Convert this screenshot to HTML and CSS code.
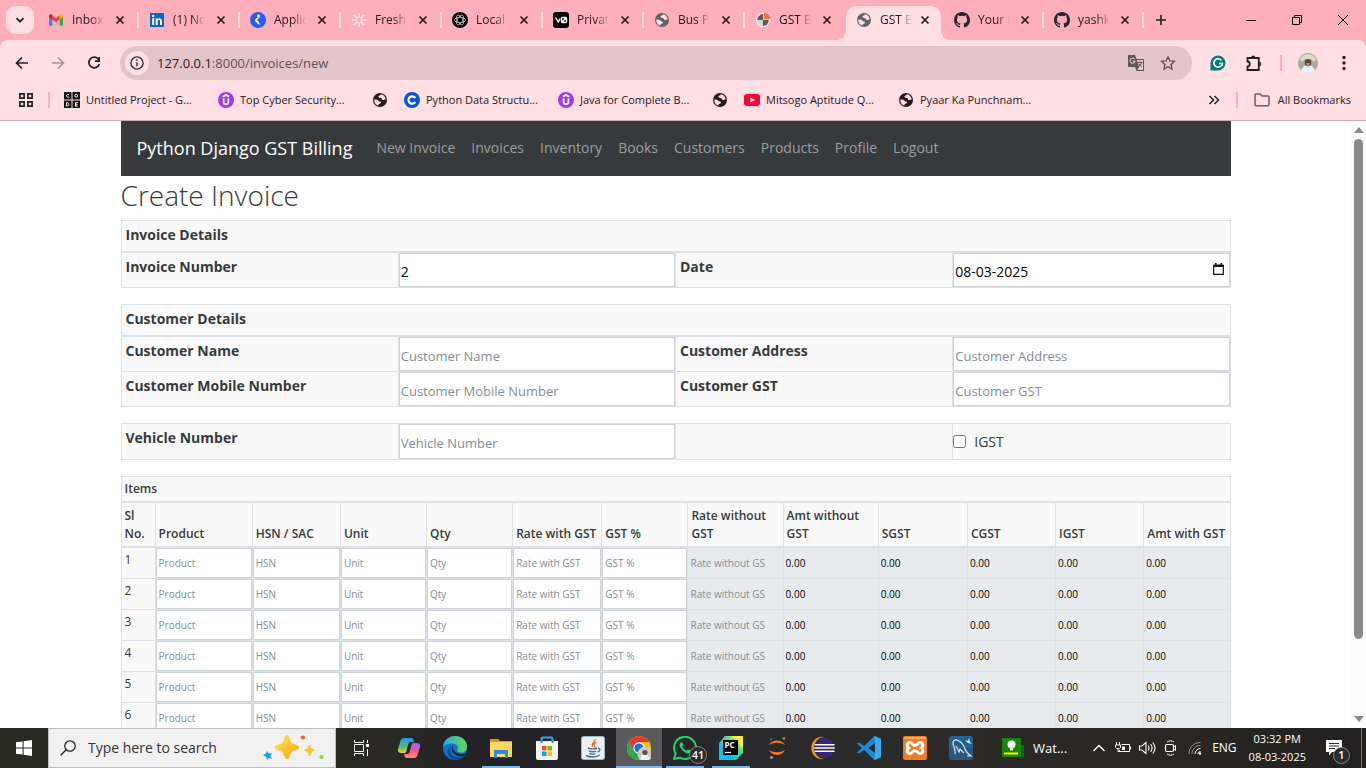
FILE: index.html
```html
<!DOCTYPE html>
<html lang="en">
<head>
<meta charset="utf-8">
<title>GST Billing</title>
<link rel="stylesheet" href="styles.css">
</head>
<body>
<svg class="defs" aria-hidden="true">
  <symbol id="close" viewBox="0 0 10 10"><path d="M1.500 1.500l7 7M8.500 1.500l-7 7" stroke="#27191c" stroke-width="1.700" fill="none"/></symbol>
  <symbol id="globe" viewBox="0 0 16 16"><circle cx="8" cy="8" r="7" fill="currentColor"/><path d="M2.300 7.500c2.500 0 3.500.2 4.200 1.200s2 .3 2.400 1.300-.8 1.600-1.600 2.100-.9.900-.9 1.500c-2.600-.6-4.400-3.200-4.100-6.100zM9 2.300c-.2 1-1.900 1.300-2.400 2s.2 1.800 1.800 1.700 1.300 1.900 2.500 2.100 1.600-1 2.800-.6C13.400 4.700 11.500 2.600 9 2.300z" fill="#ffdfe4"/></symbol>
  <symbol id="udemy" viewBox="0 0 16 16"><circle cx="8" cy="8" r="8" fill="#a435f0"/><path d="M4.800 4.800L8 2.900l3.200 1.900M5.600 6.200v3.900c0 3.100 4.800 3.100 4.800 0V6.200" fill="none" stroke="#fff" stroke-width="1.800"/></symbol>
  <symbol id="github" viewBox="0 0 16 16"><path fill="#24292f" d="M8 0C3.580 0 0 3.580 0 8c0 3.540 2.290 6.530 5.470 7.590.4.070.55-.17.55-.38v-1.490c-2.010.37-2.530-.49-2.690-.94-.09-.23-.48-.94-.82-1.130-.28-.15-.68-.52-.01-.53.63-.01 1.080.58 1.230.82.72 1.210 1.870.87 2.330.66.070-.52.280-.87.510-1.070-1.780-.2-3.640-.89-3.640-3.950 0-.87.310-1.590.82-2.150-.08-.2-.36-1.020.08-2.120 0 0 .67-.21 2.200.82a7.600 7.600 0 0 1 4 0c1.530-1.040 2.200-.82 2.200-.82.44 1.100.16 1.920.08 2.120.51.560.82 1.270.82 2.150 0 3.070-1.870 3.750-3.650 3.950.29.25.54.73.54 1.480v2.190c0 .21.15.46.55.38A8 8 0 0 0 16 8c0-4.420-3.580-8-8-8z"/></symbol>
</svg>

<header class="browser">
  <div class="tabstrip">
    <button class="tab-search" aria-label="Search tabs"><svg width="10" height="10" viewBox="0 0 10 10"><path d="M1.500 3.200L5 6.700l3.500-3.500" fill="none" stroke="#222" stroke-width="1.800"/></svg></button>
    <div class="tabs">
      <div class="tab"><svg class="fav" viewBox="0 0 16 16"><path fill="#4285f4" d="M1 3.500v9.200c0 .6.400 1 1 1h2.400V6z"/><path fill="#34a853" d="M15 3.500v9.200c0 .6-.4 1-1 1h-2.400V6z"/><path fill="#ea4335" d="M4.400 3.600L8 6.300l3.600-2.700v3.900L8 10.200 4.400 7.500z"/><path fill="#c5221f" d="M1 4c0-1.700 2-2.400 3.400-1.300v4.800L1 5z"/><path fill="#fbbc04" d="M15 4c0-1.700-2-2.400-3.400-1.300v4.800L15 5z"/></svg><span>Inbox</span><button aria-label="Close tab"><svg><use href="#close"/></svg></button></div>
      <div class="tab"><svg class="fav" viewBox="0 0 16 16"><rect x="1" y="1" width="14" height="14" rx="1" fill="#0a66c2"/><path d="M3.200 6.300h2V13h-2zM6.700 6.300h1.900v1c.9-1.600 4.400-1.700 4.400 1.600V13h-2V9.500c0-2.200-2.300-1.900-2.300 0V13h-2z" fill="#fff"/><circle cx="4.200" cy="4" r="1.200" fill="#fff"/></svg><span>(1) No</span><button aria-label="Close tab"><svg><use href="#close"/></svg></button></div>
      <div class="tab"><svg class="fav" viewBox="0 0 16 16"><circle cx="8" cy="8" r="8" fill="#275df5"/><circle cx="8.500" cy="3.800" r="1.500" fill="#fff"/><path d="M10.500 5.500C9 5.600 8.300 6.500 7 8c1.200 1.300 2.500 3 3 5-1.900-.7-3.300-2-4.500-3.500C4.800 8.600 5 7.500 5.800 6.800 6.500 6 8.500 4.900 10.500 5.500z" fill="#fff"/></svg><span>Applic</span><button aria-label="Close tab"><svg><use href="#close"/></svg></button></div>
      <div class="tab"><svg class="fav" viewBox="0 0 16 16"><path d="M8 1v5M8 10v5M1 8h5M10 8h5M3 3l3.500 3.500M9.500 9.500L13 13M13 3L9.500 6.500M6.500 9.500L3 13" stroke="#ffe7ed" stroke-width="1.400"/></svg><span>Freshe</span><button aria-label="Close tab"><svg><use href="#close"/></svg></button></div>
      <div class="tab"><svg class="fav" viewBox="0 0 16 16"><circle cx="8" cy="8" r="8" fill="#000"/><g fill="none" stroke="#ccc" stroke-width=".8"><ellipse cx="8" cy="8" rx="5.400" ry="2.700"/><ellipse cx="8" cy="8" rx="5.400" ry="2.700" transform="rotate(60 8 8)"/><ellipse cx="8" cy="8" rx="5.400" ry="2.700" transform="rotate(120 8 8)"/></g></svg><span>Local</span><button aria-label="Close tab"><svg><use href="#close"/></svg></button></div>
      <div class="tab"><svg class="fav" viewBox="0 0 16 16"><rect width="16" height="16" rx="3" fill="#000"/><path d="M2.500 5.500l2.800 4.600 1.800-3.600M8.500 10.500l5-5M9.500 5.500h3c1 0 1 0 1 1v3c0 1 0 1-1 1h-3c-1 0-1 0-1-1v-3c0-1 0-1 1-1z" stroke="#fff" stroke-width="1.400" fill="none"/></svg><span>Privat</span><button aria-label="Close tab"><svg><use href="#close"/></svg></button></div>
      <div class="tab"><svg class="fav grey"><use href="#globe"/></svg><span>Bus P</span><button aria-label="Close tab"><svg><use href="#close"/></svg></button></div>
      <div class="tab"><svg class="fav" viewBox="0 0 16 16"><circle cx="8" cy="8" r="6.700" fill="#d8d2d4" stroke="#eee"/><path d="M8 8V2a6 6 0 0 0-5.600 6z" fill="#555b60"/><path d="M8 8h5.500A5.500 5.500 0 0 1 8 14z" fill="#555b60"/><path d="M9 7V1c3.500 0 6 2.500 6 6z" fill="#ff6c37"/></svg><span>GST B</span><button aria-label="Close tab"><svg><use href="#close"/></svg></button></div>
      <div class="tab tab-active"><svg class="fav grey"><use href="#globe"/></svg><span>GST B</span><button aria-label="Close tab"><svg><use href="#close"/></svg></button></div>
      <div class="tab"><svg class="fav"><use href="#github"/></svg><span>Your R</span><button aria-label="Close tab"><svg><use href="#close"/></svg></button></div>
      <div class="tab"><svg class="fav"><use href="#github"/></svg><span>yashk</span><button aria-label="Close tab"><svg><use href="#close"/></svg></button></div>
    </div>
    <button class="new-tab" aria-label="New tab"><svg width="12" height="12" viewBox="0 0 12 12"><path d="M6 1v10M1 6h10" stroke="#222" stroke-width="1.600"/></svg></button>
    <div class="window-controls">
      <button aria-label="Minimize"><svg width="10" height="10"><path d="M0 5.500h10" stroke="#000"/></svg></button>
      <button aria-label="Restore"><svg width="10" height="10" fill="none" stroke="#000"><path d="M.5 2.500h7v7h-7zM2.500 2.500v-2h7v7h-2"/></svg></button>
      <button aria-label="Close"><svg width="10" height="10"><path d="M0 0l10 10M10 0L0 10" stroke="#000"/></svg></button>
    </div>
  </div>

  <div class="toolbar">
    <button aria-label="Back"><svg viewBox="0 0 16 16"><path d="M14 8H3M8 2.500L2.500 8 8 13.500" fill="none" stroke="#222" stroke-width="1.700"/></svg></button>
    <button aria-label="Forward"><svg viewBox="0 0 16 16"><path d="M2 8h11M8 2.500L13.500 8 8 13.500" fill="none" stroke="#a9979b" stroke-width="1.700"/></svg></button>
    <button aria-label="Reload"><svg viewBox="0 0 16 16"><path d="M12.600 4.500A5.300 5.300 0 1 0 13.300 9M13.200 2v4.200H9" fill="none" stroke="#222" stroke-width="1.700"/></svg></button>
    <div class="omnibox">
      <span class="site-info"><svg width="14" height="14" viewBox="0 0 14 14"><circle cx="7" cy="7" r="6.100" fill="none" stroke="#333" stroke-width="1.400"/><path d="M7 6.200v4M7 3.500v1.400" stroke="#333" stroke-width="1.500"/></svg></span>
      <div class="url"><b>127.0.0.1</b>:8000/invoices/new</div>
      <button aria-label="Translate"><svg viewBox="0 0 16 16"><path d="M1 0h6l1.500 4H15c.6 0 1 .4 1 1v10c0 .6-.4 1-1 1H8.500L7 12H1c-.6 0-1-.4-1-1V1c0-.6.400-1 1-1z" fill="#5f5658"/><path d="M9 5h6v10H9.300L11 12z" fill="#e1c5ca"/><path d="M6.600 4.300A2.500 2.500 0 1 0 7 6.200H4.900" fill="none" stroke="#e1c5ca" stroke-width="1.100"/><path d="M10 7.500h4.500M12.200 6.500v1M13.500 7.500c-.3 1.600-1.300 3-2.700 4M11 8.700l2.500 3" fill="none" stroke="#5f5658"/></svg></button>
      <button aria-label="Bookmark this tab"><svg viewBox="0 0 16 16"><path d="M8 1.800l1.900 4.100 4.500.5-3.300 3.100.9 4.500-4-2.300L4 14l.9-4.500L1.600 6.400l4.500-.5z" fill="none" stroke="#5f5658" stroke-width="1.400"/></svg></button>
    </div>
    <div class="extensions">
      <button aria-label="Grammarly"><svg viewBox="0 0 16 16"><path d="M8 .5a7.500 7.500 0 1 1 0 15H.5V8A7.500 7.500 0 0 1 8 .5z" fill="#027e6f"/><path d="M11.300 5.300A4.200 4.200 0 1 0 12.200 8.500H9M12.200 8.500V11" fill="none" stroke="#fff" stroke-width="1.600"/></svg></button>
      <button aria-label="Extensions"><svg viewBox="0 0 16 16"><path d="M1.500 3h11.300v12H1.500v-3.500c3 0 3-5 0-5z" fill="none" stroke="#222" stroke-width="1.800"/><path d="M5.200 2.500a2 2 0 0 1 4 0zM13.300 7a2 2 0 0 1 0 4z" fill="#222"/></svg></button>
      <i class="pink-rule"></i>
      <button aria-label="Profile"><svg class="avatar" viewBox="0 0 20 20"><circle cx="10" cy="10" r="10" fill="#a9a899"/><path d="M1.500 6A10 10 0 0 1 18.500 6l-2.500 3-3-3H7L4 9z" fill="#dcdcc8"/><path d="M3 17l3-4h8l3 4c-3 4-11 4-14 0z" fill="#eaf2fa"/><circle cx="10" cy="9.500" r="3.200" fill="#5b4339"/><path d="M8 10l2 5 2-5z" fill="#b98b78"/></svg></button>
      <button aria-label="Menu"><svg viewBox="0 0 16 16" fill="#222"><circle cx="8" cy="2.500" r="1.700"/><circle cx="8" cy="8" r="1.700"/><circle cx="8" cy="13.500" r="1.700"/></svg></button>
    </div>
  </div>

  <nav class="bookmarks" aria-label="Bookmarks">
    <button class="apps" aria-label="Apps"><svg width="14" height="14" viewBox="0 0 14 14"><path d="M.9.9h4.200v4.200H.9zM8.900.9h4.200v4.200H8.900zM.9 8.900h4.200v4.200H.9zM8.900 8.900h4.200v4.200H8.900z" fill="none" stroke="#222" stroke-width="1.700"/></svg></button>
    <i class="pink-rule"></i>
    <a class="bookmark" href="#"><svg viewBox="0 0 16 16"><path d="M0 0h7.500v7.500H0zM8.500 0H16v7.500H8.500zM0 8.500h7.500V16H0zM8.500 8.500H16V16H8.500z" fill="#111"/><g fill="none" stroke="#fff"><path d="M5 2.800C3.500 1.800 2.500 2.600 2.500 3.800S3.700 5.600 5 4.900"/><circle cx="12.200" cy="3.700" r="1.400"/><path d="M2.600 10.500v3.600c3 .2 3-3.700 0-3.600zM13.800 10.600h-2.300v3.500h2.300M11.500 12.300h2"/></g></svg>Untitled Project - G...</a>
    <a class="bookmark" href="#"><svg><use href="#udemy"/></svg>Top Cyber Security...</a>
    <a class="bookmark bookmark-icon" href="#" aria-label="Saved page"><svg><use href="#globe"/></svg></a>
    <a class="bookmark" href="#"><svg viewBox="0 0 16 16"><circle cx="8" cy="8" r="8" fill="#0056d2"/><path d="M11.300 6A3.700 3.700 0 1 0 11.300 10" fill="none" stroke="#fff" stroke-width="2.200"/></svg>Python Data Structu...</a>
    <a class="bookmark" href="#"><svg><use href="#udemy"/></svg>Java for Complete B...</a>
    <a class="bookmark bookmark-icon" href="#" aria-label="Saved page"><svg><use href="#globe"/></svg></a>
    <a class="bookmark" href="#"><svg viewBox="0 0 16 16"><rect y="2" width="16" height="12" rx="3" fill="#f03"/><path d="M6.300 5.300v5.400L11 8z" fill="#fff"/></svg>Mitsogo Aptitude Q...</a>
    <a class="bookmark" href="#"><svg><use href="#globe"/></svg>Pyaar Ka Punchnam...</a>
    <button class="more" aria-label="More bookmarks"><svg width="12" height="10" viewBox="0 0 12 10"><path d="M1.500 1l4 4-4 4M6.500 1l4 4-4 4" fill="none" stroke="#222" stroke-width="1.500"/></svg></button>
    <i class="pink-rule"></i>
    <a class="bookmark all-bookmarks" href="#"><svg viewBox="0 0 16 16"><path d="M1 3c0-.6.400-.9.900-.9h4.300L8 4h6c.6 0 1 .4 1 1v7.800c0 .6-.4 1-1 1H2c-.6 0-1-.4-1-1z" fill="none" stroke="#6b5f62" stroke-width="1.500"/></svg>All Bookmarks</a>
  </nav>
</header>

<div class="viewport">
  <main class="page">
    <div class="container">
      <nav class="navbar">
        <a class="brand" href="#">Python Django GST Billing</a>
        <a href="#">New Invoice</a><a href="#">Invoices</a><a href="#">Inventory</a><a href="#">Books</a><a href="#">Customers</a><a href="#">Products</a><a href="#">Profile</a><a href="#">Logout</a>
      </nav>
      <h1>Create Invoice</h1>

      <table class="details">
        <thead><tr><th colspan="4">Invoice Details</th></tr></thead>
        <tbody><tr>
          <th><label for="number">Invoice Number</label></th><td><input id="number" value="2"></td>
          <th><label for="date">Date</label></th><td class="date"><input id="date" value="08-03-2025"><svg width="11" height="12" viewBox="0 0 11 12"><path d="M.7 2.500h9.600v8.800H.7z" fill="none" stroke="#111" stroke-width="1.200"/><path d="M.5 1.500h10V4H.5zM2 0h1.500v2H2zM7.500 0H9v2H7.500z" fill="#111"/></svg></td>
        </tr></tbody>
      </table>

      <table class="details">
        <thead><tr><th colspan="4">Customer Details</th></tr></thead>
        <tbody>
          <tr><th><label for="name">Customer Name</label></th><td><input id="name" placeholder="Customer Name"></td><th><label for="address">Customer Address</label></th><td><input id="address" placeholder="Customer Address"></td></tr>
          <tr><th><label for="mobile">Customer Mobile Number</label></th><td><input id="mobile" placeholder="Customer Mobile Number"></td><th><label for="gst">Customer GST</label></th><td><input id="gst" placeholder="Customer GST"></td></tr>
        </tbody>
      </table>

      <table class="details">
        <tbody><tr><th><label for="vehicle">Vehicle Number</label></th><td><input id="vehicle" class="tall" placeholder="Vehicle Number"></td><td></td><td><div class="check"><input type="checkbox" id="igst"><label for="igst">IGST</label></div></td></tr></tbody>
      </table>

      <table class="items">
        <colgroup><col class="w-no"><col class="w-product"><col class="w-tax"><col class="w-mid"><col class="w-mid"><col class="w-rate"><col class="w-mid"><col class="w-wide"><col class="w-wide"><col class="w-rate"><col class="w-tax"><col class="w-tax"><col class="w-mid"></colgroup>
        <thead>
          <tr><th colspan="13">Items</th></tr>
          <tr class="heads"><th>Sl No.</th><th>Product</th><th>HSN / SAC</th><th>Unit</th><th>Qty</th><th>Rate with GST</th><th>GST %</th><th>Rate without GST</th><th>Amt without GST</th><th>SGST</th><th>CGST</th><th>IGST</th><th>Amt with GST</th></tr>
        </thead>
        <tbody id="item-rows"></tbody>
      </table>
    </div>
  </main>
  <div class="scrollbar"><svg width="10" height="6"><path d="M0 6l5-6 5 6z"/></svg><div class="thumb"></div><svg width="10" height="6"><path d="M0 0l5 6 5-6z"/></svg></div>
</div>

<footer class="taskbar">
  <button class="start" aria-label="Start"><svg width="16" height="16" fill="#fff"><path d="M0 2.300L6.600 1.400v6.100H0zM7.600 1.200L16 0v7.500H7.600zM0 8.500h6.600v6.100L0 13.700zM7.600 8.500H16V16l-8.400-1.200z"/></svg></button>
  <div class="search">
    <svg width="16" height="16" viewBox="0 0 16 16"><circle cx="10" cy="6" r="5.200" fill="none" stroke="#222" stroke-width="1.300"/><path d="M6.200 9.800L.7 15.300" stroke="#222" stroke-width="1.400"/></svg>
    <input type="text" aria-label="Search" placeholder="Type here to search">
    <svg width="62" height="26" viewBox="0 0 62 26"><defs><linearGradient id="gold" x2="1" y2="1"><stop stop-color="#ffe35a"/><stop offset="1" stop-color="#f5a80c"/></linearGradient></defs><path d="M24 0c1.500 0 2 1.500 3 4.500s2 4 5 5 4 1.500 4 3-1.500 2-4.500 3-3.500 2-4.500 5-1.500 3.500-3 3.500-2-1.500-3-4-2-3.500-5-4.500-4.500-1.500-4.500-3 1.500-2 4.500-3 4-2 5-5S22.500 0 24 0z" fill="url(#gold)"/><path d="M46.500 10c1 3 2 4 5 5-3 1.500-4 2.500-5 6-1-3.500-2-4.500-5-6 3-1 4-2 5-5z" fill="#ffc529" stroke="#ffc529"/><path d="M4 16l2 2.500L9 18l-1.500 3L9 23.500l-3.200-.5L4 25l-.8-3L0 20l3-1.200z" fill="#0aa5f0"/><circle cx="40" cy="2.500" r="2.100" fill="#f0622b"/><circle cx="58.500" cy="22" r="2.100" fill="#92cf4c"/></svg>
  </div>
  <button class="task-view" aria-label="Task view"><svg width="17" height="16" fill="none" stroke="#fff"><path d="M1.500 0v2.500h9V0M1.500 16v-2.500h9V16M1.500 4.500h9v7h-9zM14.500 0v3M14.500 9v7"/><path d="M13 4h3v3h-3z" fill="#fff" stroke="none"/></svg></button>
  <div class="apps-row">
    <button aria-label="Copilot"><svg viewBox="0 0 24 24"><defs><linearGradient id="cp1" y2="1" x2="0"><stop stop-color="#1b9af0"/><stop offset=".6" stop-color="#4fbd70"/><stop offset="1" stop-color="#ffc83d"/></linearGradient><linearGradient id="cp2" y2="1" x2="0"><stop stop-color="#a95bf5"/><stop offset=".6" stop-color="#f45b8c"/><stop offset="1" stop-color="#ff965a"/></linearGradient></defs><path d="M7 2h7c1.500 0 2 .5 2.500 2l.5 2h-3c-1.500 0-2.200.8-2.600 2L9.500 15c-.5 1.500-1 2-2.500 2H4c-2.500 0-3.500-2-3-4L3.500 5C4 3 5 2 7 2z" fill="url(#cp1)"/><path d="M17 22h-7c-1.500 0-2-.5-2.500-2L7 18h3c1.500 0 2.200-.8 2.600-2L14.500 9c.5-1.500 1-2 2.500-2h3c2.500 0 3.500 2 3 4l-2.500 8c-.5 2-1.500 3-3.500 3z" fill="url(#cp2)"/></svg></button>
    <button aria-label="Edge"><svg viewBox="0 0 24 24"><defs><linearGradient id="ed" x2="1"><stop stop-color="#28a9e8"/><stop offset="1" stop-color="#63d950"/></linearGradient></defs><circle cx="12" cy="12" r="12" fill="#1473c9"/><path d="M0 11C.5 4 6 0 12 0c8 0 12 5.500 12 10.500 0 4-3 6-6 6s-4.500-1-3.500-2.500c2-3.500-1-6.500-5-6.500C5 7.500 1 9 0 11z" fill="url(#ed)"/><path d="M9 10c-3 2-3 9 4.500 11 3.500 1 7-.6 9-3-3 6-10 7.500-15 4C2.500 17.500 4 12 9 10z" fill="#0c4a9a"/><path d="M10 9.500c-1.500 4 3 8.500 9 8.500 2 0 3.500-1 4-1.500-.8 1.700-1.500 2.500-2.500 3.500-8 2-15-6-10.500-10.500z" fill="#25252a"/></svg></button>
    <button class="open" aria-label="File Explorer"><svg viewBox="0 0 24 24"><path d="M1 3h8l2 2h12v5H1z" fill="#d99b13"/><path d="M1 6h22v15H1z" fill="#ffd766"/><path d="M5 14h14v8h-3v-4H8v4H5z" fill="#2f8ad2"/></svg></button>
    <button aria-label="Microsoft Store"><svg viewBox="0 0 24 24"><path d="M6.500 7V3c0-1 .5-1.500 1.500-1.500h8c1 0 1.500.5 1.500 1.500v4" stroke="#2aa8e8" stroke-width="2" fill="none"/><path d="M1 5h22v17c0 1.300-.7 2-2 2H3c-1.300 0-2-.7-2-2z" fill="#f5f5f5"/><path d="M7 10h4.500v4.500H7z" fill="#f25022"/><path d="M12.500 10H17v4.500h-4.500z" fill="#7fba00"/><path d="M7 15.500h4.500V20H7z" fill="#00a4ef"/><path d="M12.500 15.500H17V20h-4.500z" fill="#ffb900"/><path d="M6.500 7V5M17.500 7V5" stroke="#1383d8" stroke-width="2"/></svg></button>
    <button aria-label="Java"><svg viewBox="0 0 24 24"><rect x=".5" y=".5" width="23" height="23" rx="2" fill="#eceff2" stroke="#9fb4c7"/><path d="M14 3c1 3-5 4-2 8M15.500 6c-3 2-3 3-1.500 5" stroke="#e76f1c" stroke-width="1.400" fill="none"/><path d="M7 12c3 1 7 1 9 0M8 15c2 1 6 1 7 0M8.500 17.500c2 .8 4.500.8 6 0M5 19.500c4 2 10 2 14-.5M17 12.500c3-.5 2 3-.5 3.500" stroke="#4a7596" stroke-width="1.400" fill="none"/></svg></button>
    <button class="open current" aria-label="Chrome"><svg viewBox="0 0 24 24"><circle cx="12" cy="12" r="12" fill="#fbc116"/><path d="M1.600 6A12 12 0 0 1 22.400 6H12L6.800 15z" fill="#e33b2e"/><path d="M1.600 6A12 12 0 0 0 12 24l5-9-10 0z" fill="#2da94f"/><circle cx="12" cy="12" r="5.800" fill="#fff"/><circle cx="12" cy="12" r="4.600" fill="#1a73e8"/><circle cx="18" cy="18" r="7.500" fill="#cbc9c2"/><path d="M13 22l3-4h4l3 4c-3 4-7 4-10 0z" fill="#f3f7fb"/><circle cx="18" cy="16.500" r="2.600" fill="#66503f"/></svg></button>
    <button class="open" aria-label="WhatsApp"><svg viewBox="0 0 24 24"><path d="M1 23l1.600-5.500A11 11 0 1 1 6.700 21.500z" fill="#25282b" stroke="#25d366" stroke-width="2"/><path d="M8 6.500c-2 1-2 3.500 0 6 2.500 3.500 5 5 7.500 5 1.500 0 3-1.500 2.500-2.800l-3-1.500-1.500 1.600c-2-.8-3.500-2.300-4.300-4.200L10.500 9 9.300 6.500z" fill="#25d366"/></svg><span class="badge">41</span></button>
    <button class="open" aria-label="PyCharm"><svg viewBox="0 0 24 24"><defs><linearGradient id="py" x2="1" y1="1" y2="0"><stop offset=".3" stop-color="#07c3f2"/><stop offset=".65" stop-color="#54dc90"/><stop offset=".8" stop-color="#f5ee3c"/></linearGradient></defs><path d="M6 0h18v17l-7 7H0V7z" fill="url(#py)"/><path d="M4 4h15v15H4z" fill="#000"/><path d="M6 16.500h6" stroke="#fff" stroke-width="1.300"/><text x="5.500" y="12" class="svg-text">PC</text></svg></button>
    <button aria-label="Jupyter"><svg viewBox="0 0 24 24"><path d="M4 9c3-6 13-6 16 0-5-3-11-3-16 0zM4 14c3 6.500 13 6.500 16 0-5 3-11 3-16 0z" fill="#f37726"/><circle cx="19" cy="2.500" r="1.300" fill="#999"/><circle cx="6" cy="3" r=".8" fill="#999"/><circle cx="6.500" cy="21.500" r="1.600" fill="#999"/></svg></button>
    <button aria-label="Eclipse"><svg viewBox="0 0 24 24"><circle cx="11.500" cy="12" r="11.200" fill="#f7941e"/><circle cx="14" cy="12" r="11" fill="#28262a"/><circle cx="13.500" cy="12" r="10.200" fill="#35296b"/><path d="M3.500 8.800h20M3.300 12h20.400M3.500 15.200h20" stroke="#fff" stroke-width="1.500"/></svg></button>
    <button aria-label="VS Code"><svg viewBox="0 0 24 24"><path d="M17.500 0L24 2.700v18.600L17.500 24 7 14l-5 3.800L0 16.500 5 12 0 7.500l2-1.300L7 10zM18 7l-6.500 5 6.500 5z" fill="#1a8ad6" fill-rule="evenodd"/><path d="M17.500 0L24 2.700v18.600L17.500 24l.5-7V7z" fill="#3ba7f0"/></svg></button>
    <button aria-label="XAMPP"><svg viewBox="0 0 24 24"><rect width="24" height="24" rx="2" fill="#f37b23"/><path d="M1 1h22v2H1z" fill="#f9a96b"/><path d="M7 6.500c2.500 0 2.500 3 5 3s2.500-3 5-3c3.500 0 3.500 4 1.500 5.500 2 1.500 2 5.500-1.500 5.500-2.500 0-2.500-3-5-3s-2.500 3-5 3c-3.500 0-3.500-4-1.500-5.500C3.500 10.500 3.500 6.500 7 6.500z" stroke="#fff" stroke-width="3" fill="none"/></svg></button>
    <button aria-label="MySQL Workbench"><svg viewBox="0 0 24 24"><rect width="24" height="24" rx="3" fill="#1f6392"/><path d="M0 12h24v9c0 2-1 3-3 3H3c-2 0-3-1-3-3z" fill="#2b557b"/><path d="M6 18c1-3-2-8-2-11s3-4 6-2c4 2 5 5 6 8s2 4 6 7h-4M7 10l3 6 1-3 4 4" stroke="#dfeaf3" fill="none" stroke-width="1.200"/><path d="M16 4l3 1 1-3 1 4 2 2-4-1z" fill="#dfeaf3"/></svg></button>
  </div>
  <div class="tray">
    <button class="weather"><svg width="22" height="20" viewBox="0 0 22 20"><path d="M17 7h5v12h-5z" fill="#0a6d13"/><rect width="19" height="19" rx="1" fill="#17850e"/><circle cx="9.500" cy="6.500" r="4" fill="#fff"/><path d="M8 9h3v3.500H8z" fill="#d8f0d8"/><path d="M2 15.500h14" stroke="#fff200" stroke-width="2"/></svg>Wat...</button>
    <button class="tray-icon" aria-label="Show hidden icons"><svg viewBox="0 0 18 16"><path d="M3.500 11L9 5.500l5.500 5.500" fill="none" stroke="#fff" stroke-width="1.300"/></svg></button>
    <button class="tray-icon" aria-label="Battery"><svg viewBox="0 0 18 16"><path d="M7.500 4.500h8v7h-10V10M16.500 6.500v3M2.500 2v3M5.500 2v3M1.500 5h5v2.500l-1 1h-3l-1-1zM4 9v2.500h1.500" fill="none" stroke="#fff"/><path d="M8 6.500h3v3.500H8z" fill="#fff"/></svg></button>
    <button class="tray-icon" aria-label="Volume"><svg viewBox="0 0 18 16"><path d="M1.500 6h2.500l4-3.500v11L4 10H1.500zM10 5.500c1.300 1.500 1.300 3.500 0 5M12.500 4c2 2.500 2 5.500 0 8M14.700 2.500c3 3.500 3 7.500 0 11" fill="none" stroke="#fff" stroke-width="1.100"/></svg></button>
    <button class="tray-icon" aria-label="Camera"><svg viewBox="0 0 18 16"><rect x="3.500" y="4.500" width="8" height="7" rx="1.500" fill="none" stroke="#fff" stroke-width="1.200"/><path d="M11.500 7l2-1.500v5l-2-1.500M5 2c2-1.500 5-1.500 7 0M5 14c2 1.500 5 1.500 7 0" fill="none" stroke="#fff"/></svg></button>
    <button class="tray-icon" aria-label="Wi-Fi"><svg viewBox="0 0 18 16"><g fill="none" stroke="#999"><path d="M3 14C3 7 8 2.500 14.500 2.500M6 14c0-5 4-8.500 8.500-8.500"/><path d="M9 14c0-3 2.500-5.500 5.500-5.500M12 14c0-1.500 1-2.500 2.500-2.500" stroke="#fff"/></g><circle cx="14" cy="13.500" r="1.200" fill="#fff"/></svg></button>
    <span class="lang">ENG</span>
    <div class="clock"><span>03:32 PM</span><span>08-03-2025</span></div>
    <button class="notify" aria-label="Notifications"><svg width="16" height="16" viewBox="0 0 16 16"><path d="M0 0h16v12H6l-3 3.500V12H0z" fill="#fff"/><path d="M3 3.500h10M3 6h10M3 8.500h6" stroke="#292929"/></svg><span class="badge">1</span></button>
  </div>
</footer>
<script src="rows.js"></script>
</body>
</html>
```
FILE: rows.js
```js
const editable = ["Product", "HSN", "Unit", "Qty", "Rate with GST", "GST %"];
const computed = ["Amt without GST", "SGST", "CGST", "IGST", "Amt with GST"];
const body = document.getElementById("item-rows");

for (let n = 1; n <= 6; n++) {
  const inputs = editable.map(
    (name) => `<td><input placeholder="${name}" aria-label="${name}, item ${n}"></td>`
  );
  inputs.push(`<td><input readonly placeholder="Rate without GS" aria-label="Rate without GST, item ${n}"></td>`);
  computed.forEach((name) =>
    inputs.push(`<td><input readonly value="0.00" aria-label="${name}, item ${n}"></td>`)
  );
  body.insertAdjacentHTML("beforeend", `<tr><td class="no">${n}</td>${inputs.join("")}</tr>`);
}
```
FILE: styles.css
```css
* { box-sizing: border-box; }
body {
  margin: 0;
  height: 100vh;
  display: flex;
  flex-direction: column;
  overflow: hidden;
  background: #fff;
  color: #373a3c;
  font: 14px/24px "Open Sans", "Noto Sans", sans-serif;
}
button { border: 0; padding: 0; margin: 0; background: none; font: inherit; color: inherit; display: grid; place-items: center; }
a { color: inherit; text-decoration: none; }
svg { display: block; flex: none; }
.defs { position: absolute; width: 0; height: 0; }

/* Browser frame */
.browser { flex: none; background: #ffaebc; border-bottom: 1px solid #c9acb2; font-size: 12px; line-height: 16px; color: #27191c; }
.tabstrip { height: 40px; display: flex; align-items: center; padding-left: 6px; }
.tab-search { width: 28px; height: 28px; border-radius: 9px; background: #ffdfe4; margin-right: 4px; }
.tabs { display: grid; grid-template-columns: repeat(8, 101px) 98px repeat(2, 100px); align-self: stretch; }
.tab { display: flex; align-items: center; margin: 6px 0 0; padding: 0 14px 6px 10px; position: relative; }
.tab::after { content: ""; position: absolute; right: 0; top: 6px; width: 2px; height: 16px; background: #ffdfe4; }
.tab:nth-child(8)::after { display: none; }
.fav { width: 16px; height: 16px; margin-right: 8px; }
.grey { color: #5f6368; }
.tab span { width: 32px; flex: none; white-space: nowrap; mask-image: linear-gradient(90deg, #000 60%, transparent); }
.tab button { margin-left: auto; }
.tab button svg { width: 10px; height: 10px; }
.tab-active { background: #ffdfe4; border-radius: 10px 10px 0 0; margin-right: 3px; padding-right: 11px; }
.tab-active::before, .tab-active::after { content: ""; position: absolute; top: auto; bottom: 0; width: 10px; height: 10px; }
.tab-active::before { left: -10px; background: radial-gradient(circle at 0 0, transparent 10px, #ffdfe4 10px); }
.tab-active::after { right: -10px; background: radial-gradient(circle at 100% 0, transparent 10px, #ffdfe4 10px); }
.new-tab { width: 34px; height: 28px; }
.window-controls { margin-left: auto; display: flex; }
.window-controls button { width: 46px; height: 40px; }

.toolbar { height: 46px; display: flex; align-items: center; padding: 0 12px 0 4px; border-radius: 8px 8px 0 0; background: #ffdfe4; }
.toolbar button { width: 36px; height: 28px; }
.toolbar button svg { width: 16px; height: 16px; }
.omnibox { flex: 1; height: 34px; margin-left: 8px; padding: 0 8px 0 5px; border-radius: 17px; background: #e1c5ca; display: flex; align-items: center; }
.site-info { width: 24px; height: 24px; border-radius: 12px; background: #ffdfe4; display: grid; place-items: center; }
.url { flex: 1; margin-left: 8px; font-size: 13px; color: #5e5356; }
.url b { font-weight: 400; color: #27191c; }
.omnibox button { width: 32px; }
.extensions { display: flex; align-items: center; padding-left: 8px; }
.extensions .pink-rule { margin: 0 8px; }
.extensions button:last-child { width: 36px; margin-right: -8px; }
.toolbar .avatar { width: 20px; height: 20px; }
.pink-rule { width: 2px; height: 16px; background: #ffaebc; flex: none; }

.bookmarks { height: 34px; padding: 0 15px 6px 19px; display: flex; align-items: center; background: #ffdfe4; }
.apps { margin-right: 15px; }
.apps + .pink-rule { margin-right: 14px; }
.bookmark { width: 154px; display: flex; align-items: center; gap: 6px; white-space: nowrap; font-size: 11px; }
.bookmark svg { width: 16px; height: 16px; }
.bookmark-icon { width: 32px; }
.more { margin: 0 16px 0 auto; }
.all-bookmarks { width: auto; gap: 8px; margin-left: 16px; }

/* Page */
.viewport { flex: 1; min-height: 0; display: flex; }
.page { flex: 1; overflow: hidden; }
.container { max-width: 1110px; margin: 0 auto; }
.scrollbar { width: 15px; background: #fcfcfc; display: flex; flex-direction: column; align-items: center; padding: 6px 0; fill: #8b8b8b; }
.thumb { width: 9px; height: 84%; margin: 6px 0 auto; border-radius: 5px; background: #8b8b8b; }
.navbar { display: flex; align-items: center; height: 55px; padding: 0 8px 2px 16px; background: #373a3c; color: #9b9d9e; }
.navbar a { padding: 0 8px; }
.navbar .brand { padding: 0; margin-right: 16px; font-size: 18px; color: #fff; }
h1 { margin: 0; padding: 1px 0 7px; font-size: 28px; line-height: 36px; font-weight: 300; }

table { width: 100%; border-collapse: collapse; table-layout: fixed; margin-bottom: 16px; background: #f9f9f9; }
th, td { border: 1px solid #dee2e6; padding: 0; text-align: left; vertical-align: top; }
th { padding: 2px 4px; font-weight: 700; }
thead th { border-bottom-width: 2px; }
.details thead th { padding: 2px 4px 4px; }
input { font: inherit; color: #000; }
input:not([type]) { display: block; width: 100%; height: 34px; padding: 2px 1px 0; border: 1px solid #ced4da; border-radius: 0; background: #fff; font-size: 14px; outline: 0; }
input::placeholder { color: #868e96; opacity: 1; font-size: 13px; }
.details .tall { height: 35px; }
.date { position: relative; }
.date svg { position: absolute; right: 6px; top: 10px; }
.check { display: flex; align-items: center; gap: 8px; height: 35px; }
.check input { width: 13px; height: 13px; margin: 0; }

.items { font-size: 12px; line-height: 18px; }
.items th { padding: 3px; font-weight: 600; }
.items .heads th { vertical-align: bottom; padding: 4px 3px 3px; }
.items input:not([type]) { height: 30px; font-size: 10px; padding: 0 2px 1px; }
.items input::placeholder { font-size: 10px; }
.items input:read-only { background: #e8ebee; border-color: transparent; padding-left: 1px; }
.items .no { padding: 3px; }
.w-no { width: 34px; }
.w-product { width: 97px; }
.w-mid { width: 86px; }
.w-rate { width: 89px; }
.w-wide { width: 95px; }
.w-tax { width: 88px; }

/* Taskbar */
.taskbar { flex: none; height: 40px; display: flex; align-items: stretch; background: linear-gradient(90deg, #292a20, #2a2a22 28%, #222227 34%, #2b2b2c 60%, #292723 85%, #222120); color: #fff; font-size: 12px; line-height: 18px; }
.start { width: 48px; }
.search { width: 288px; display: flex; align-items: center; gap: 12px; padding: 0 10px 0 11px; background: #f1f1f1; border: 1px solid #bdbdbd; }
.search input { flex: 1; min-width: 0; border: 0; padding: 0; background: none; font-size: 14px; }
.search input::placeholder { color: #333; font-size: 14px; }
.task-view { width: 50px; }
.apps-row { width: 598px; display: grid; grid-template-columns: repeat(13, 1fr); }
.apps-row button { position: relative; }
.apps-row button > svg { width: 24px; height: 24px; }
.open::after { content: ""; position: absolute; left: 4px; right: 4px; bottom: 0; height: 2px; background: #76b9ed; }
.current { background: #59595c; }
.current::after { left: 0; right: 0; }
.svg-text { font: 700 8px "Open Sans", sans-serif; fill: #fff; }
.badge { position: absolute; right: 1px; bottom: 4px; width: 18px; height: 18px; border: 1px solid #888; border-radius: 9px; background: #2b2b2c; font-size: 11px; line-height: 15px; text-align: center; font-weight: 600; }
.tray { margin-left: auto; display: flex; align-items: center; }
.weather { display: flex; align-items: center; gap: 9px; font-size: 13px; margin-right: 20px; }
.tray-icon { width: 24px; height: 40px; }
.tray-icon svg { width: 18px; height: 16px; }
.lang { margin: 0 12px 0 5px; }
.clock { display: grid; text-align: center; font-size: 11px; }
.notify { position: relative; width: 56px; height: 40px; margin-right: 4px; border-right: 1px solid #777; }
.notify .badge { right: 11px; bottom: 4px; width: 17px; height: 17px; line-height: 14px; }
```
